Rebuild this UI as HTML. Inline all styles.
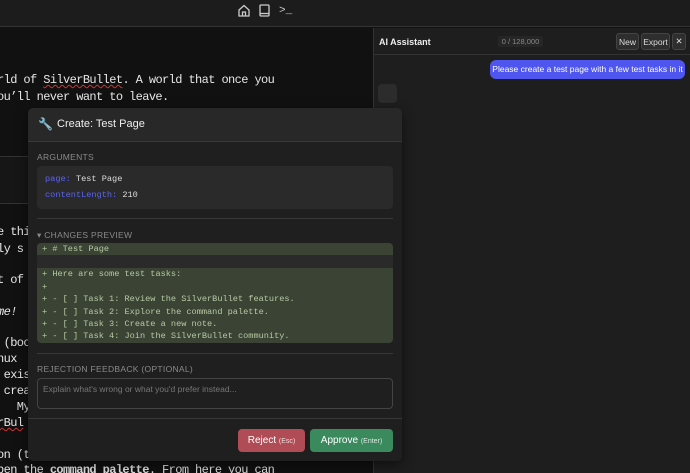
<!DOCTYPE html>
<html><head><meta charset="utf-8"><style>
*{margin:0;padding:0;box-sizing:border-box}
html,body{width:690px;height:473px;overflow:hidden}
body{background:#111;font-family:"Liberation Sans",sans-serif;position:relative;color:#ddd}
.a{position:absolute}
.mono{font-family:"Liberation Mono",monospace}
.ed{font-family:"Liberation Mono",monospace;font-size:12px;letter-spacing:-0.6px;color:#e6e6e6;white-space:pre}
.u{text-decoration:underline wavy #c33;text-decoration-thickness:1px}
.btn{position:absolute;top:33px;height:17px;border:1px solid #444;background:#2e2e2e;border-radius:3px;font-size:8.5px;color:#ddd;display:flex;align-items:center;justify-content:center}
.lbl{font-size:8.5px;color:#8a8a8a;letter-spacing:.3px}
.dl{font-family:"Liberation Mono",monospace;font-size:8.6px;color:#b7c9a3;white-space:pre;position:absolute;left:5px}
</style></head><body>
<div class="a" style="left:0;top:0;width:690px;height:27px;background:#1c1c1c;border-bottom:1px solid #333"></div>
<svg class="a" style="left:238px;top:4px" width="12" height="13" viewBox="0 0 12 13" fill="none" stroke="#ccc" stroke-width="1.3"><path d="M1 6L6 1.5L11 6V12H1Z"/><path d="M4.5 12V8h3v4"/></svg>
<svg class="a" style="left:259px;top:4px" width="11" height="13" viewBox="0 0 11 13" fill="none" stroke="#ccc" stroke-width="1.3"><rect x="1" y="1" width="9" height="11" rx="1"/><path d="M1 9.5h9"/></svg>
<div class="a mono" style="left:279px;top:5px;font-size:11px;color:#ccc">&gt;_</div>

<div class="a" style="left:0;top:156px;width:373px;height:48px;background:#161616;border-top:1px solid #333;border-bottom:1px solid #333"></div>
<div class="a ed" style="left:-3px;top:73px">rld of <span class="u">SilverBullet</span>. A world that once you</div>
<div class="a ed" style="left:-3px;top:90px">ou’ll never want to leave.</div>
<div class="a ed" style="left:-3px;top:225px">e thi</div>
<div class="a ed" style="left:-3px;top:242px">ly s</div>
<div class="a ed" style="left:-3px;top:273px">t of</div>
<div class="a ed" style="left:-3px;top:305px;font-style:italic">me!</div>
<div class="a ed" style="left:-3px;top:336px"> (boo</div>
<div class="a ed" style="left:-3px;top:352px">nux</div>
<div class="a ed" style="left:-3px;top:368px"> exis</div>
<div class="a ed" style="left:-3px;top:384px"> crea</div>
<div class="a ed" style="left:-3px;top:400px">   My</div>
<div class="a ed" style="left:-3px;top:416px"><span class="u">rBul</span></div>
<div class="a ed" style="left:-3px;top:448px">on (t</div>
<div class="a ed" style="left:-3px;top:463px">pen the <b>command palette</b>. From here you can</div>

<div class="a" style="left:373px;top:28px;width:317px;height:445px;background:#1e1e1e;border-left:1px solid #333"></div>
<div class="a" style="left:374px;top:28px;width:316px;height:27px;border-bottom:1px solid #333"></div>
<div class="a" style="left:379px;top:37px;font-size:9px;font-weight:bold;color:#eee">AI Assistant</div>
<div class="a" style="left:498px;top:36px;width:45px;height:11px;background:#262626;border-radius:2px;font-size:7.5px;color:#888;text-align:center;line-height:11px">0 / 128,000</div>
<div class="btn" style="left:616px;width:23px">New</div>
<div class="btn" style="left:641px;width:29px">Export</div>
<div class="btn" style="left:672px;width:14px">✕</div>
<div class="a" style="left:490px;top:60px;width:195px;height:19px;background:#4f56f0;border-radius:6px;font-size:8.5px;color:#fff;line-height:19px;text-align:center;white-space:nowrap">Please create a test page with a few test tasks in it</div>
<div class="a" style="left:378px;top:84px;width:19px;height:19px;background:#2c2c2c;border-radius:4px"></div>

<div class="a" style="left:28px;top:108px;width:374px;height:353px;background:#1f1f1f;border-radius:5px;box-shadow:0 4px 12px rgba(0,0,0,.5)">
 <div class="a" style="left:0;top:0;width:374px;height:34px;background:#282828;border-bottom:1px solid #383838;border-radius:5px 5px 0 0"></div>
 <div class="a" style="left:10px;top:9px;font-size:12px;color:#9ab">🔧</div>
 <div class="a" style="left:29px;top:10px;font-size:11px;color:#eee">Create: Test Page</div>
 <div class="a lbl" style="left:9px;top:44px">ARGUMENTS</div>
 <div class="a" style="left:9px;top:58px;width:356px;height:43px;background:#2a2a2a;border-radius:4px"></div>
 <div class="a mono" style="left:17px;top:66px;font-size:8.6px;color:#ddd"><span style="color:#5a63f5">page:</span> Test Page</div>
 <div class="a mono" style="left:17px;top:82px;font-size:8.6px;color:#ddd"><span style="color:#5a63f5">contentLength:</span> 210</div>
 <div class="a" style="left:9px;top:110px;width:356px;height:1px;background:#383838"></div>
 <div class="a lbl" style="left:9px;top:122px">▾ CHANGES PREVIEW</div>
 <div class="a" style="left:9px;top:135px;width:356px;height:100px;background:#2a2a2a;border-radius:4px;overflow:hidden">
  <div class="a" style="left:0;top:0;width:356px;height:12px;background:#3a4334"></div>
  <div class="a" style="left:0;top:25px;width:356px;height:75px;background:#3a4334"></div>
  <div class="dl" style="top:1px">+ # Test Page</div>
  <div class="dl" style="top:26px">+ Here are some test tasks:</div>
  <div class="dl" style="top:39px">+</div>
  <div class="dl" style="top:51px">+ - [ ] Task 1: Review the SilverBullet features.</div>
  <div class="dl" style="top:64px">+ - [ ] Task 2: Explore the command palette.</div>
  <div class="dl" style="top:76px">+ - [ ] Task 3: Create a new note.</div>
  <div class="dl" style="top:88px">+ - [ ] Task 4: Join the SilverBullet community.</div>
 </div>
 <div class="a" style="left:9px;top:245px;width:356px;height:1px;background:#383838"></div>
 <div class="a lbl" style="left:9px;top:256px">REJECTION FEEDBACK (OPTIONAL)</div>
 <div class="a" style="left:9px;top:270px;width:356px;height:31px;background:#1f1f1f;border:1px solid #444;border-radius:4px"></div>
 <div class="a" style="left:15px;top:276px;font-size:8.5px;color:#777">Explain what's wrong or what you'd prefer instead...</div>
 <div class="a" style="left:0;top:310px;width:374px;height:1px;background:#383838"></div>
 <div class="a" style="left:210px;top:321px;width:67px;height:23px;background:#b04c55;border-radius:4px;color:#fff;font-size:10px;text-align:center;line-height:23px">Reject <span style="font-size:7px;opacity:.8">(Esc)</span></div>
 <div class="a" style="left:282px;top:321px;width:83px;height:23px;background:#3b8a5e;border-radius:4px;color:#fff;font-size:10px;text-align:center;line-height:23px">Approve <span style="font-size:7px;opacity:.8">(Enter)</span></div>
</div>
</body></html>
